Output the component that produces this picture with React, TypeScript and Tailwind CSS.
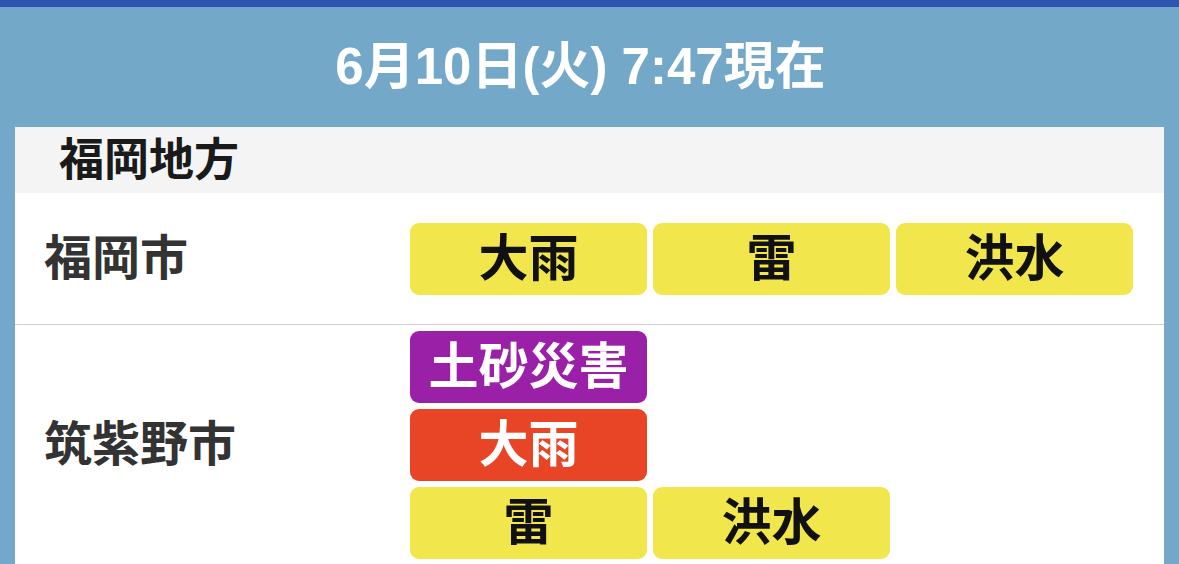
import React from "react";

type Badge = { label: string; kind: "yellow" | "purple" | "red" };

const badgeClass: Record<Badge["kind"], string> = {
  yellow: "bg-[#f1e64b] text-[#111111]",
  purple: "bg-[#9b20a8] text-white",
  red: "bg-[#e84526] text-white",
};

function Chip({ b }: { b: Badge }) {
  return (
    <div
      className={`h-[72px] rounded-[9px] flex items-center justify-center text-[50px] font-bold leading-none ${badgeClass[b.kind]}`}
    >
      {b.label}
    </div>
  );
}

export default function App() {
  const font = {
    fontFamily: '"Liberation Sans", "Noto Sans CJK JP", sans-serif',
  };
  return (
    <div className="w-[1179px] h-[564px] overflow-hidden bg-[#74a8c9]" style={font}>
      <div className="h-[7px] bg-[#2f55b1]" />
      <div className="h-[120px] flex items-center justify-center pb-[2px] pr-[18px]">
        <h1 className="text-white text-[51px] font-bold leading-none">6月10日(火) 7:47現在</h1>
      </div>
      <div className="mx-[15px] bg-white">
        <div className="h-[66px] bg-[#f4f4f4] flex items-center pl-[44px]">
          <span className="text-[45px] font-bold leading-none text-[#1a1a1a]">福岡地方</span>
        </div>
        <div className="flex items-center pt-[30px] pb-[29px] border-b border-[#cfcfcf]">
          <div className="w-[395px] pl-[29px] text-[48px] font-bold leading-none text-[#333333]">福岡市</div>
          <div className="grid grid-cols-[237px_237px_237px] gap-[6px]">
            <Chip b={{ label: "大雨", kind: "yellow" }} />
            <Chip b={{ label: "雷", kind: "yellow" }} />
            <Chip b={{ label: "洪水", kind: "yellow" }} />
          </div>
        </div>
        <div className="flex items-center py-[6px]">
          <div className="w-[395px] pl-[29px] text-[48px] font-bold leading-none text-[#333333]">筑紫野市</div>
          <div className="grid grid-cols-[237px_237px_237px] gap-[6px]">
            <Chip b={{ label: "土砂災害", kind: "purple" }} />
            <div className="col-span-2" />
            <Chip b={{ label: "大雨", kind: "red" }} />
            <div className="col-span-2" />
            <Chip b={{ label: "雷", kind: "yellow" }} />
            <Chip b={{ label: "洪水", kind: "yellow" }} />
          </div>
        </div>
      </div>
    </div>
  );
}
